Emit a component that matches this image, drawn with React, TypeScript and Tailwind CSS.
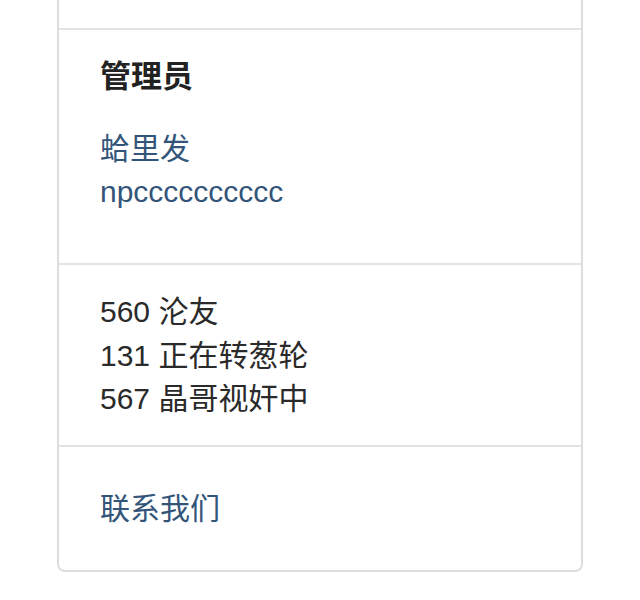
import React from "react";

export default function App() {
  const font = {
    fontFamily: '"Liberation Sans", "Noto Sans CJK SC", sans-serif',
  };
  return (
    <div
      className="w-[640px] min-h-[600px] bg-white px-[57px] text-[30px] leading-[43px] text-[#333]"
      style={font}
    >
      <div className="w-[526px] border-2 border-t-0 border-[#dddddd] rounded-b-[8px]">
        <div className="h-[28px]" />
        <div className="border-t-2 border-[#e3e3e3] px-[41px] pt-[25px] pb-[50px]">
          <div className="font-bold text-[31px] text-[#222]">管理员</div>
          <div className="mt-[29px] text-[#34557a]">
            <div>蛤里发</div>
            <div>npcccccccccc</div>
          </div>
        </div>
        <div className="border-t-2 border-[#e3e3e3] px-[41px] pt-[25px] pb-[24px] leading-[43.5px] text-[#2a2a2a]">
          <div>560 沦友</div>
          <div>131 正在转葱轮</div>
          <div>567 晶哥视奸中</div>
        </div>
        <div className="border-t-2 border-[#e3e3e3] px-[41px] pt-[40px] pb-[40px] text-[#34557a]">
          <div>联系我们</div>
        </div>
      </div>
    </div>
  );
}
